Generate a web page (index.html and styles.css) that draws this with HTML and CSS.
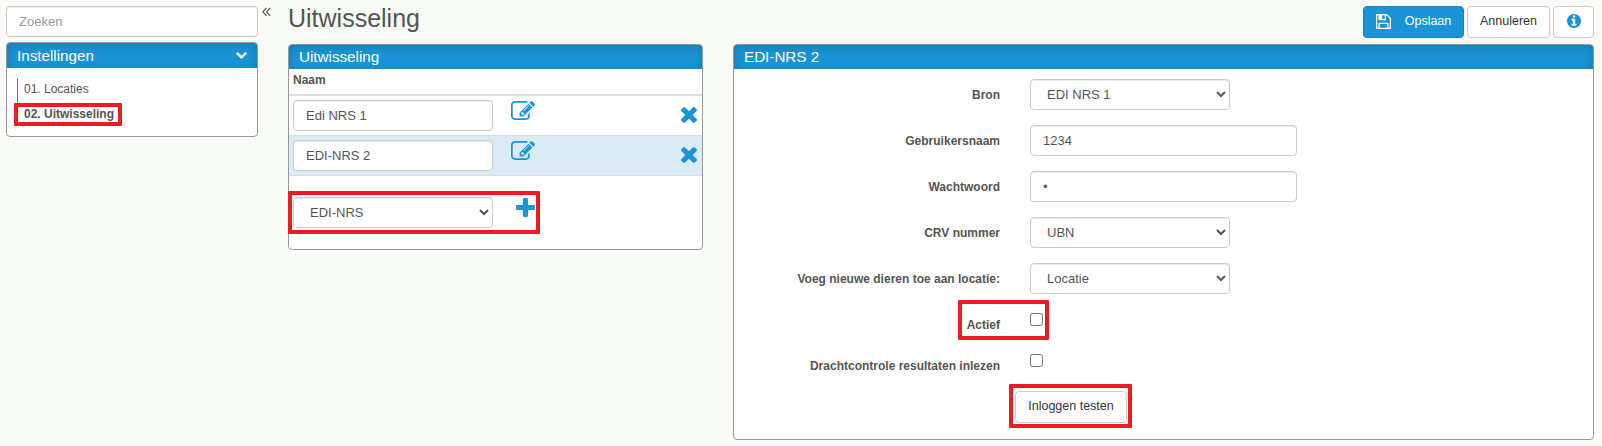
FILE: index.html
```html
<!DOCTYPE html>
<html lang="nl">
<head>
    <meta charset="UTF-8">
    <meta name="viewport" content="width=device-width, initial-scale=1.0">
    <title>Uitwisseling</title>
    <link rel="stylesheet" href="styles.css">
</head>
<body>
    <!-- Icons -->
    <svg class="icon-defs">
        <symbol id="icon-edit" viewBox="0 128 1792 1408"><path d="M888 1184l116-116-152-152-116 116v56h96v96h56zm440-720q-16-16-33 1l-350 350q-17 17-1 33t33-1l350-350q17-17 1-33zm80 594v190q0 119-84.500 203.500t-203.500 84.500h-832q-119 0-203.500-84.500t-84.500-203.500v-832q0-119 84.500-203.500t203.500-84.500h832q63 0 117 25 15 7 18 23 3 17-9 29l-49 49q-14 14-32 8-23-6-45-6h-832q-66 0-113 47t-47 113v832q0 66 47 113t113 47h832q66 0 113-47t47-113v-126q0-13 9-22l64-64q15-15 35-7t20 29zm-96-738l288 288-672 672h-288v-288zm444 132l-92 92-288-288 92-92q28-28 68-28t68 28l152 152q28 28 28 68t-28 68z"/></symbol>
        <symbol id="icon-times" viewBox="302 366 1188 1188"><path d="M1490 1322q0 40-28 68l-136 136q-28 28-68 28t-68-28l-294-294-294 294q-28 28-68 28t-68-28l-136-136q-28-28-28-68t28-68l294-294-294-294q-28-28-28-68t28-68l136-136q28-28 68-28t68 28l294 294 294-294q28-28 68-28t68 28l136 136q28 28 28 68t-28 68l-294 294 294 294q28 28 28 68z"/></symbol>
        <symbol id="icon-plus" viewBox="192 128 1408 1408"><path d="M1600 736v192q0 40-28 68t-68 28h-416v416q0 40-28 68t-68 28h-192q-40 0-68-28t-28-68v-416h-416q-40 0-68-28t-28-68v-192q0-40 28-68t68-28h416v-416q0-40 28-68t68-28h192q40 0 68 28t28 68v416h416q40 0 68 28t28 68z"/></symbol>
        <symbol id="icon-chevron" viewBox="90 533 1612 1035"><path d="M1683 808l-742 741q-19 19-45 19t-45-19l-742-741q-19-19-19-45.500t19-45.500l166-165q19-19 45-19t45 19l531 531 531-531q19-19 45-19t45 19l166 165q19 19 19 45.500t-19 45.500z"/></symbol>
        <symbol id="icon-save" viewBox="128 128 1536 1536"><path d="M512 1536h768v-384h-768v384zm896 0h128v-896q0-14-10-38.500t-20-34.500l-281-281q-10-10-34-20t-39-10v416q0 40-28 68t-68 28h-576q-40 0-68-28t-28-68v-416h-128v1280h128v-416q0-40 28-68t68-28h832q40 0 68 28t28 68v416zm-384-928v-320q0-13-9.500-22.500t-22.500-9.500h-192q-13 0-22.500 9.500t-9.500 22.500v320q0 13 9.500 22.500t22.500 9.500h192q13 0 22.500-9.500t9.500-22.500zm640 32v928q0 40-28 68t-68 28h-1344q-40 0-68-28t-28-68v-1344q0-40 28-68t68-28h928q40 0 88 20t76 48l280 280q28 28 48 76t20 88z"/></symbol>
        <symbol id="icon-info" viewBox="128 128 1536 1536"><path d="M1152 1376v-160q0-14-9-23t-23-9h-96v-512q0-14-9-23t-23-9h-320q-14 0-23 9t-9 23v160q0 14 9 23t23 9h96v320h-96q-14 0-23 9t-9 23v160q0 14 9 23t23 9h448q14 0 23-9t9-23zm-128-896v-160q0-14-9-23t-23-9h-192q-14 0-23 9t-9 23v160q0 14 9 23t23 9h192q14 0 23-9t9-23zm640 416q0 209-103 385.500t-279.500 279.500-385.500 103-385.500-103-279.500-279.500-103-385.500 103-385.500 279.500-279.500 385.500-103 385.500 103 279.500 279.500 103 385.500z"/></symbol>
    </svg>

    <div class="page">
        <aside class="sidebar">
            <input type="text" class="form-control search" placeholder="Zoeken">
            <div class="panel">
                <div class="panel-heading menu-heading">
                    <span>Instellingen</span>
                    <svg class="icon-chevron"><use href="#icon-chevron"/></svg>
                </div>
                <ul class="menu">
                    <li>01. Locaties</li>
                    <li class="active">02. Uitwisseling<span class="marker marker-menu"></span></li>
                </ul>
            </div>
        </aside>

        <svg class="collapse" viewBox="0 0 9 10"><path d="M4.500 .8L.9 4.800l3.600 4M8.300 .8L4.700 4.800l3.600 4"/></svg>

        <main class="content">
            <header class="topbar">
                <h1>Uitwisseling</h1>
                <div class="actions">
                    <button class="btn btn-primary"><svg class="icon-save"><use href="#icon-save"/></svg>Opslaan</button>
                    <button class="btn">Annuleren</button>
                    <button class="btn btn-info"><svg class="icon-info"><use href="#icon-info"/></svg></button>
                </div>
            </header>

            <div class="columns">
                <section class="panel list-panel">
                    <div class="panel-heading">Uitwisseling</div>
                    <div class="list-head">Naam</div>
                    <div class="list-row">
                        <input type="text" class="form-control" value="Edi NRS 1">
                        <svg class="icon-edit"><use href="#icon-edit"/></svg>
                        <svg class="icon-times"><use href="#icon-times"/></svg>
                    </div>
                    <div class="list-row selected">
                        <input type="text" class="form-control" value="EDI-NRS 2">
                        <svg class="icon-edit"><use href="#icon-edit"/></svg>
                        <svg class="icon-times"><use href="#icon-times"/></svg>
                    </div>
                    <div class="list-add">
                        <select class="form-control"><option>EDI-NRS</option></select>
                        <svg class="icon-plus"><use href="#icon-plus"/></svg>
                        <span class="marker marker-add"></span>
                    </div>
                </section>

                <section class="panel detail-panel">
                    <div class="panel-heading">EDI-NRS 2</div>
                    <form class="detail-form">
                        <div class="form-group">
                            <label>Bron</label>
                            <select class="form-control"><option>EDI NRS 1</option></select>
                        </div>
                        <div class="form-group">
                            <label>Gebruikersnaam</label>
                            <input type="text" class="form-control wide" value="1234">
                        </div>
                        <div class="form-group">
                            <label>Wachtwoord</label>
                            <input type="text" class="form-control wide" value="•">
                        </div>
                        <div class="form-group">
                            <label>CRV nummer</label>
                            <select class="form-control"><option>UBN</option></select>
                        </div>
                        <div class="form-group">
                            <label>Voeg nieuwe dieren toe aan locatie:</label>
                            <select class="form-control"><option>Locatie</option></select>
                        </div>
                        <div class="form-group check">
                            <label>Actief</label>
                            <input type="checkbox">
                            <span class="marker marker-active"></span>
                        </div>
                        <div class="form-group check">
                            <label>Drachtcontrole resultaten inlezen</label>
                            <input type="checkbox">
                        </div>
                        <div class="form-submit">
                            <button type="button" class="btn">Inloggen testen</button>
                            <span class="marker marker-test"></span>
                        </div>
                    </form>
                </section>
            </div>
        </main>
    </div>
</body>
</html>
```

FILE: styles.css
```css
* {
    box-sizing: border-box;
}

body {
    margin: 0;
    background-color: #f9fbf7;
    color: #555;
    font-family: "Liberation Sans", Arial, sans-serif;
    font-size: 12px;
}

svg {
    display: block;
    flex: none;
    fill: #1a94d6;
}

.icon-defs {
    display: none;
}

.page {
    display: flex;
    height: 446px;
    padding: 6px 8px 0 6px;
}

.sidebar {
    width: 252px;
}

.search {
    display: block;
    width: 100%;
    margin-bottom: 5px;
}

.search::placeholder {
    color: #999;
    opacity: 1;
}

.collapse {
    width: 9px;
    height: 10px;
    margin: 1px 0 0 4px;
    fill: none;
    stroke: #555;
    stroke-width: 1.2;
}

.content {
    flex: 1;
    margin-left: 17px;
}

/* Panels */
.panel {
    border: 1px solid #999;
    border-radius: 4px;
    background-color: white;
}

.panel-heading {
    display: flex;
    align-items: center;
    justify-content: space-between;
    height: 24px;
    padding: 0 10px 1px;
    border-radius: 3px 3px 0 0;
    background-color: #1a94d6;
    box-shadow: inset 0 2px 10px rgba(0, 0, 0, 0.18);
    color: white;
    font-size: 15.2px;
}

.menu-heading {
    height: 25px;
}

.icon-chevron {
    width: 11px;
    height: 7px;
    margin-top: 1px;
    fill: white;
}

.menu {
    margin: 0;
    padding: 10px;
    list-style: none;
}

.menu li {
    position: relative;
    height: 25px;
    padding-left: 6px;
    border-left: 1px solid #1a94d6;
    line-height: 23px;
}

.menu .active {
    height: 23px;
    font-weight: bold;
}

/* Form controls */
.form-control {
    width: 200px;
    height: 31px;
    padding: 4px 12px;
    border: 1px solid #ccc;
    border-radius: 4px;
    background-color: white;
    box-shadow: inset 0 1px 1px rgba(0, 0, 0, 0.075);
    color: #555;
    font-family: inherit;
    font-size: 13px;
}

.form-control.search {
    width: 100%;
}

.form-control.wide {
    width: 267px;
}

.btn {
    display: flex;
    align-items: center;
    justify-content: center;
    height: 32px;
    padding: 0 12px 3px;
    border: 1px solid #ccc;
    border-radius: 4px;
    background-color: white;
    color: #333;
    font-family: inherit;
    font-size: 12.500px;
}

.btn-primary {
    width: 101px;
    border-color: #1785c0;
    background-color: #1a94d6;
    color: white;
}

.btn-info {
    width: 41px;
}

.icon-save {
    width: 15px;
    height: 15px;
    margin: 1px 14px 0 0;
    fill: white;
}

.icon-info {
    width: 14px;
    height: 14px;
}

/* Header */
.topbar {
    display: flex;
    justify-content: space-between;
    height: 38px;
}

h1 {
    margin: -2px 0 0;
    font-size: 25px;
    font-weight: normal;
    line-height: 29px;
}

.actions {
    display: flex;
    align-items: flex-start;
    gap: 3px;
}

.columns {
    display: flex;
    align-items: flex-start;
    gap: 30px;
}

/* List */
.list-panel {
    width: 415px;
    height: 206px;
}

.list-head {
    height: 27px;
    padding-left: 4px;
    border-bottom: 2px solid #ddd;
    font-weight: bold;
    line-height: 23px;
}

.list-row {
    display: flex;
    align-items: flex-start;
    height: 40px;
    padding: 4px 5px 0 4px;
    border-bottom: 1px solid #ddd;
}

.list-row.selected {
    background-color: #d9ebf5;
}

.icon-edit {
    width: 24px;
    height: 19px;
    margin: 1px 0 0 18px;
}

.icon-times {
    width: 16px;
    height: 16px;
    margin: 7px 0 0 auto;
}

.list-add {
    position: relative;
    display: flex;
    align-items: flex-start;
    padding: 21px 0 0 4px;
}

.icon-plus {
    width: 19px;
    height: 19px;
    margin: 1px 0 0 23px;
}

/* Detail form */
.detail-panel {
    flex: 1;
    height: 396px;
}

.detail-form {
    padding-top: 10px;
}

.form-group {
    position: relative;
    display: flex;
    align-items: flex-start;
    gap: 30px;
    height: 46px;
}

.form-group label {
    width: 266px;
    padding-top: 9px;
    font-weight: bold;
    text-align: right;
}

.form-group.check {
    height: 41px;
}

.form-group input[type="checkbox"] {
    width: 13px;
    height: 13px;
    margin: 4px 0 0;
}

.form-submit {
    position: relative;
    display: flex;
    padding-left: 281px;
}

.form-submit .btn {
    width: 112px;
}

/* Red highlight frames */
.marker {
    position: absolute;
    border: 4px solid #ed1c24;
    border-radius: 1px;
    pointer-events: none;
}

.marker-menu {
    top: 0;
    left: -4px;
    width: 108px;
    height: 23px;
}

.marker-add {
    top: 15px;
    left: -1px;
    width: 252px;
    height: 43px;
}

.marker-active {
    top: -9px;
    left: 224px;
    width: 91px;
    height: 40px;
}

.marker-test {
    top: -7px;
    left: 275px;
    width: 123px;
    height: 44px;
}
```
